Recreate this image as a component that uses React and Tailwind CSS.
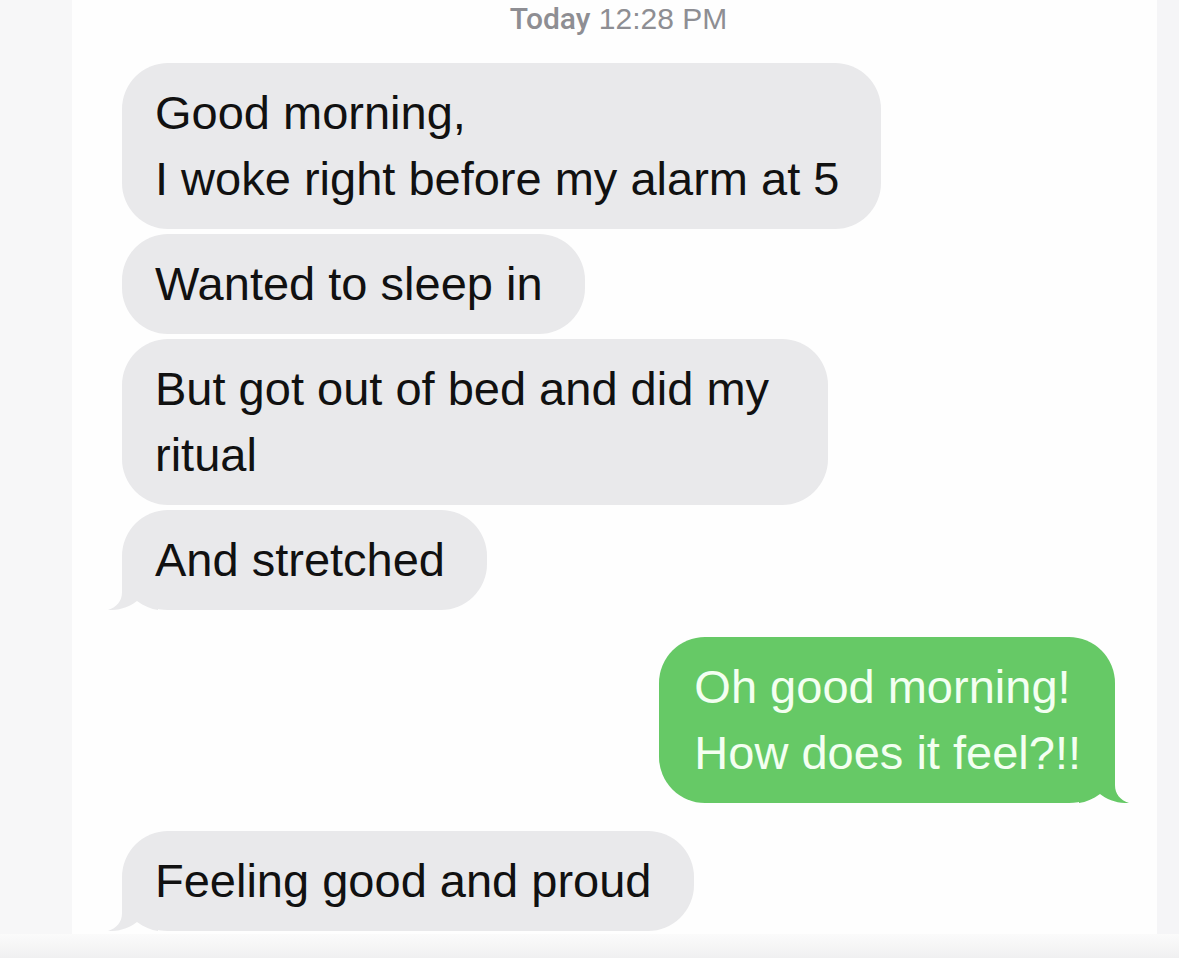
import React from "react"

const GRAY = "#e9e9eb"
const GREEN = "#66c966"

const Tail = ({ side, color }) => {
  const pos = side === "left" ? "left-[-14px]" : "right-[-14px] -scale-x-100"
  return (
    <svg
      className={`absolute bottom-0 w-[50px] h-[46px] ${pos}`}
      viewBox="0 0 50 46"
      aria-hidden="true"
    >
      <path
        d="M14 0 V28 C14 37 9 43 0 46 C11 46.5 22 43 29 37 C36 42 43 45 50 46 V0 Z"
        fill={color}
      />
    </svg>
  )
}

const Bubble = ({ children, tail, mine, className = "" }) => {
  return (
    <div
      className={`relative w-fit rounded-[46px] py-[17px] text-[47px] leading-[66px] ${
        mine
          ? "self-end bg-[#66c966] text-[#f3fff1] pl-[35px] pr-[34px]"
          : "bg-[#e9e9eb] text-[#111111] pl-[33px] pr-[42px]"
      } ${className}`}
    >
      <span className="relative z-10">{children}</span>
      {tail && <Tail side={mine ? "right" : "left"} color={mine ? GREEN : GRAY} />}
    </div>
  )
}

const App = () => {
  return (
    <div className="w-[1179px] h-[958px] flex flex-col overflow-hidden bg-[#f6f6f7] font-['Liberation_Sans',Arial,sans-serif]">
      <div className="flex flex-1 min-h-0">
        <div className="w-[72px] bg-[#f7f7f8]" />
        <main className="flex-1 flex flex-col bg-[#fefefe] pl-[50px] pr-[42px]">
          <div className="mt-[1px] text-center text-[30px] leading-[36px] text-[#8e8e93]">
            <span className="font-['Roboto',sans-serif] font-medium">Today</span> 12:28 PM
          </div>

          <div className="mt-[26px] flex flex-col gap-[5px]">
            <Bubble>
              Good morning,
              <br />I woke right before my alarm at 5
            </Bubble>
            <Bubble>Wanted to sleep in</Bubble>
            <Bubble className="max-w-[706px]">But got out of bed and did my ritual</Bubble>
            <Bubble tail>And stretched</Bubble>
          </div>

          <div className="mt-[27px] flex flex-col">
            <Bubble mine tail>
              Oh good morning!
              <br />
              How does it feel?!!
            </Bubble>
          </div>

          <div className="mt-[28px] flex flex-col">
            <Bubble tail>Feeling good and proud</Bubble>
          </div>
        </main>
        <div className="w-[22px] bg-[#f5f5f7]" />
      </div>
      <div className="h-[24px] bg-gradient-to-b from-[#fbfbfb] to-[#f0f0f1]" />
    </div>
  )
}

export default App
